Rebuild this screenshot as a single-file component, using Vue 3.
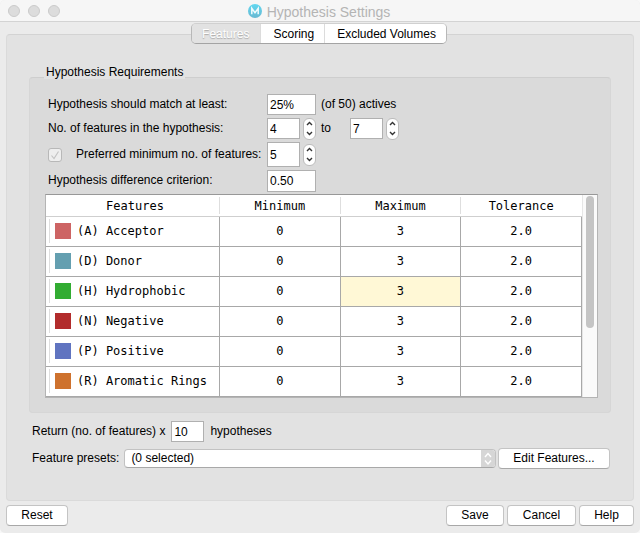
<script setup>
import { ref } from 'vue'

const tabs = ['Features', 'Scoring', 'Excluded Volumes']
const active = ref('Features')
const matchPct = ref('25%')
const minFeatures = ref('4')
const maxFeatures = ref('7')
const preferred = ref('5')
const criterion = ref('0.50')
const multiplier = ref('10')
const columns = ['Features', 'Minimum', 'Maximum', 'Tolerance']
const rows = [
  { name: '(A) Acceptor', color: '#cd6464', min: 0, max: 3, tol: '2.0' },
  { name: '(D) Donor', color: '#649fb0', min: 0, max: 3, tol: '2.0' },
  { name: '(H) Hydrophobic', color: '#32ac32', min: 0, max: 3, tol: '2.0', edited: true },
  { name: '(N) Negative', color: '#b22c2c', min: 0, max: 3, tol: '2.0' },
  { name: '(P) Positive', color: '#6074c0', min: 0, max: 3, tol: '2.0' },
  { name: '(R) Aromatic Rings', color: '#ce722e', min: 0, max: 3, tol: '2.0' }
]
const step = (field, by) => {
  field.value = String(Number(field.value) + by)
}
const spin = {
  min: (by) => step(minFeatures, by),
  max: (by) => step(maxFeatures, by),
  preferred: (by) => step(preferred, by)
}
</script>

<template>
  <div class="window">
    <header class="titlebar">
      <div class="lights">
        <button type="button" aria-label="Close"></button>
        <button type="button" aria-label="Minimize"></button>
        <button type="button" aria-label="Zoom"></button>
      </div>
      <h1>
        <svg class="logo" viewBox="0 0 14 14" aria-hidden="true">
          <defs>
            <linearGradient id="logo-fill" x1="0" y1="0" x2="0" y2="1">
              <stop offset="0" stop-color="#62d8f0" />
              <stop offset="1" stop-color="#68b8d2" />
            </linearGradient>
          </defs>
          <circle cx="7" cy="7" r="7" fill="url(#logo-fill)" />
          <path d="M3.8 10.2V4.2L7 8.6L10.2 4.2V10.2" fill="none" stroke="#f2fbfd" stroke-width="1.5" />
        </svg>
        <span>Hypothesis Settings</span>
      </h1>
    </header>

    <div class="tabs" role="tablist">
      <button
        v-for="tab in tabs"
        :key="tab"
        type="button"
        role="tab"
        :aria-selected="active === tab"
        :class="{ active: active === tab }"
        @click="active = tab"
      >{{ tab }}</button>
    </div>

    <main class="panel">
      <fieldset class="group">
        <legend>Hypothesis Requirements</legend>
        <div class="form">
          <label for="match">Hypothesis should match at least:</label>
          <div class="controls">
            <input id="match" v-model="matchPct" class="wide" type="text">
            <span class="after">(of 50) actives</span>
          </div>

          <label for="fmin">No. of features in the hypothesis:</label>
          <div class="controls">
            <input id="fmin" v-model="minFeatures" type="text">
            <span class="spinner">
              <button type="button" aria-label="Increase minimum" @click="spin.min(1)"><svg viewBox="0 0 7 5"><path d="M1 4L3.5 1.5L6 4" /></svg></button>
              <button type="button" aria-label="Decrease minimum" @click="spin.min(-1)"><svg viewBox="0 0 7 5"><path d="M1 1L3.5 3.5L6 1" /></svg></button>
            </span>
            <label for="fmax" class="after to">to</label>
            <input id="fmax" v-model="maxFeatures" type="text">
            <span class="spinner">
              <button type="button" aria-label="Increase maximum" @click="spin.max(1)"><svg viewBox="0 0 7 5"><path d="M1 4L3.5 1.5L6 4" /></svg></button>
              <button type="button" aria-label="Decrease maximum" @click="spin.max(-1)"><svg viewBox="0 0 7 5"><path d="M1 1L3.5 3.5L6 1" /></svg></button>
            </span>
          </div>

          <div class="check">
            <span class="tick">
              <input id="usepref" type="checkbox" checked disabled>
              <svg viewBox="0 0 14 14" aria-hidden="true"><path d="M3.5 7.5L6 10.5L10.5 3.5" /></svg>
            </span>
            <label for="usepref">Preferred minimum no. of features:</label>
          </div>
          <div class="controls">
            <input id="pref" v-model="preferred" type="text" aria-label="Preferred minimum no. of features">
            <span class="spinner">
              <button type="button" aria-label="Increase preferred" @click="spin.preferred(1)"><svg viewBox="0 0 7 5"><path d="M1 4L3.5 1.5L6 4" /></svg></button>
              <button type="button" aria-label="Decrease preferred" @click="spin.preferred(-1)"><svg viewBox="0 0 7 5"><path d="M1 1L3.5 3.5L6 1" /></svg></button>
            </span>
          </div>

          <label for="crit">Hypothesis difference criterion:</label>
          <div class="controls">
            <input id="crit" v-model="criterion" class="wide" type="text">
          </div>
        </div>

        <div class="tablebox">
          <table>
            <thead>
              <tr><th v-for="c in columns" :key="c" scope="col"><span>{{ c }}</span></th></tr>
            </thead>
            <tbody>
              <tr v-for="r in rows" :key="r.name">
                <td><div class="feature"><i class="swatch" :style="{ background: r.color }"></i>{{ r.name }}</div></td>
                <td>{{ r.min }}</td>
                <td :class="{ edited: r.edited }">{{ r.max }}</td>
                <td>{{ r.tol }}</td>
              </tr>
            </tbody>
          </table>
          <div class="scrollbar"><div class="thumb"></div></div>
        </div>
      </fieldset>

      <div class="line">
        <label for="mult">Return (no. of features) x</label>
        <input id="mult" v-model="multiplier" type="text">
        <span>hypotheses</span>
      </div>
      <div class="line presets">
        <label for="presets">Feature presets:</label>
        <span class="combo">
          <select id="presets"><option>(0 selected)</option></select>
          <svg viewBox="0 0 14 17" aria-hidden="true"><path d="M4 7L7 3.5L10 7M4 10.5L7 14L10 10.5" /></svg>
        </span>
        <button type="button" class="push edit">Edit Features...</button>
      </div>
    </main>

    <footer>
      <button type="button" class="push reset">Reset</button>
      <button type="button" class="push save">Save</button>
      <button type="button" class="push cancel">Cancel</button>
      <button type="button" class="push help">Help</button>
    </footer>
  </div>
</template>

<style>
body {
  margin: 0;
  background: #f8f8f8;
}
</style>

<style scoped>
* {
  box-sizing: border-box;
}
.window {
  display: flex;
  flex-direction: column;
  min-height: 100vh;
  background: #ebebeb;
  border-radius: 5px;
  overflow: hidden;
  font: 12px/14px "Liberation Sans", Arial, sans-serif;
  color: #000;
}
button,
input,
select {
  font: inherit;
  color: inherit;
  margin: 0;
}
.titlebar {
  display: grid;
  grid-template-columns: 60px 1fr 60px;
  align-items: center;
  height: 22px;
  padding: 0 8px;
  background: #f6f6f6;
  border-bottom: 1px solid #d3d3d3;
}
.lights {
  display: flex;
  gap: 8px;
}
.lights button {
  width: 12px;
  height: 12px;
  padding: 0;
  border: 1px solid #cacaca;
  border-radius: 50%;
  background: #dcdcdc;
}
h1 {
  display: flex;
  justify-content: center;
  align-items: center;
  gap: 5px;
  margin: 0;
  padding-right: 2px;
  font-size: 14px;
  line-height: 20px;
  font-weight: 400;
  color: #b4b4b4;
}
h1 span {
  padding-top: 2px;
}
.logo {
  width: 14px;
  height: 14px;
}
.tabs {
  position: relative;
  display: flex;
  align-self: center;
  margin: 1px 2px -10px 0;
  height: 21px;
  border: 1px solid #b8b8b8;
  border-top-color: #d0d0d0;
  border-bottom-color: #a4a4a4;
  border-radius: 5px;
  overflow: hidden;
}
.tabs button {
  border: 0;
  border-left: 1px solid #dcdcdc;
  padding: 0 10px 0 12px;
  background: #fff;
}
.tabs button:first-child {
  border-left: 0;
  padding: 0 11px 0 10px;
}
.tabs button.active {
  background: #e2e2e2;
  color: #fff;
  text-shadow: 0 1px 1px #a8a8a8;
}
.panel {
  flex: 1;
  margin: 0 6px 4px;
  padding: 30px 22px 30px;
  background: #e2e2e2;
  border: 1px solid #dadada;
  border-top-color: #d3d3d3;
  border-radius: 4px;
}
.group {
  position: relative;
  min-width: 0;
  margin: 0;
  margin-top: 12px;
  padding: 16px 12px 14px 15px;
  background: #dadada;
  border: 1px solid #d6d6d6;
  border-top-color: #cecece;
  border-radius: 4px;
}
legend {
  position: absolute;
  top: -13px;
  left: 14px;
  padding: 0 2px;
  background: #e2e2e2;
}
.form {
  display: grid;
  grid-template-columns: 219px 1fr;
  grid-template-rows: 21px 21px 25px 22px;
  gap: 3px 0;
  align-items: center;
  padding-left: 3px;
}
.form label,
.after,
.line label,
.line > span:not(.combo) {
  padding-bottom: 2px;
}
.controls {
  display: flex;
  align-items: center;
  align-self: stretch;
  gap: 3px;
}
input[type="text"] {
  width: 33px;
  height: 100%;
  padding: 0 2px;
  border: 1px solid #b0b0b0;
  border-radius: 0;
  background: #fff;
}
input.wide {
  width: 49px;
}
.after {
  margin-left: 2px;
}
.to {
  width: 26px;
}
.spinner {
  display: flex;
  flex-direction: column;
  width: 13px;
  height: 22px;
  border: 1px solid #bcbcbc;
  border-radius: 6px;
  background: #fff;
  overflow: hidden;
}
.spinner button {
  flex: 1;
  display: flex;
  align-items: center;
  justify-content: center;
  padding: 0;
  border: 0;
  background: none;
}
.spinner svg {
  width: 7px;
  height: 5px;
}
.spinner path {
  fill: none;
  stroke: #333;
  stroke-width: 1.4;
}
.check {
  display: flex;
  align-items: center;
  gap: 14px;
}
.tick {
  position: relative;
  width: 14px;
  height: 14px;
}
.tick input {
  appearance: none;
  display: block;
  width: 14px;
  height: 14px;
  border: 1px solid #b8b8b8;
  border-radius: 3px;
  background: #eee;
}
.tick svg {
  position: absolute;
  inset: 0;
  fill: none;
  stroke: #c2c2c2;
  stroke-width: 1.1;
  pointer-events: none;
}
.tablebox {
  display: grid;
  grid-template-columns: 1fr 15px;
  margin-top: 2px;
  border: 1px solid #b4b4b4;
  border-top-color: #989898;
  background: #fff;
}
table {
  width: 100%;
  table-layout: fixed;
  border-collapse: separate;
  border-spacing: 0;
  font: 12px/14px "DejaVu Sans Mono", monospace;
  text-align: center;
}
th {
  height: 22px;
  padding: 2px 0;
  border-bottom: 1px solid #cfcfcf;
  font-weight: 400;
}
th span {
  display: block;
  padding: 2px 0 0;
  line-height: 15px;
  border-right: 1px solid #dedede;
}
th:last-child span {
  border-right-color: transparent;
}
th:first-child {
  width: 174px;
}
th:first-child span {
  padding-left: 5px;
}
td {
  height: 30px;
  padding: 0 0 1px;
  border-right: 1px solid #a8a8a8;
  border-bottom: 1px solid #a8a8a8;
}
td.edited {
  background: #fff8d6;
}
.feature {
  display: flex;
  align-items: center;
  gap: 6px;
  height: 24px;
  margin-left: 3px;
  padding-left: 5px;
  border-left: 1px solid #dedede;
}
.swatch {
  width: 16px;
  height: 16px;
}
.scrollbar {
  padding: 1px 3px;
  background: #fafafa;
  border-left: 1px solid #e6e6e6;
}
.thumb {
  width: 8px;
  height: 66%;
  border-radius: 4px;
  background: #c4c4c4;
}
.line {
  display: flex;
  align-items: center;
  gap: 6px;
  height: 21px;
  margin-top: 8px;
  padding-left: 3px;
}
.presets {
  margin-top: 6px;
  padding-right: 1px;
  gap: 2px;
}
.presets label {
  margin-right: 3px;
}
.combo {
  position: relative;
  flex: 1;
  height: 19px;
}
.combo select {
  appearance: none;
  width: 100%;
  height: 100%;
  padding: 0 16px 2px 6px;
  border: 1px solid #c2c2c2;
  border-bottom-color: #a8a8a8;
  border-radius: 4px;
  background: #fff;
}
.combo svg {
  position: absolute;
  top: 1px;
  right: 1px;
  width: 14px;
  height: 17px;
  border-radius: 0 3px 3px 0;
  background: #d6d6d6;
  fill: none;
  stroke: #fff;
  stroke-width: 1.4;
  pointer-events: none;
}
.push {
  height: 21px;
  padding: 0 0 2px;
  border: 1px solid #c4c4c4;
  border-bottom-color: #a8a8a8;
  border-radius: 4px;
  background: #fff;
}
.edit {
  width: 112px;
}
footer {
  display: flex;
  gap: 3px;
  padding: 0 6px 7px;
}
.reset {
  width: 62px;
  margin-right: auto;
}
.save {
  width: 58px;
}
.cancel {
  width: 69px;
}
.help {
  width: 55px;
}
</style>
